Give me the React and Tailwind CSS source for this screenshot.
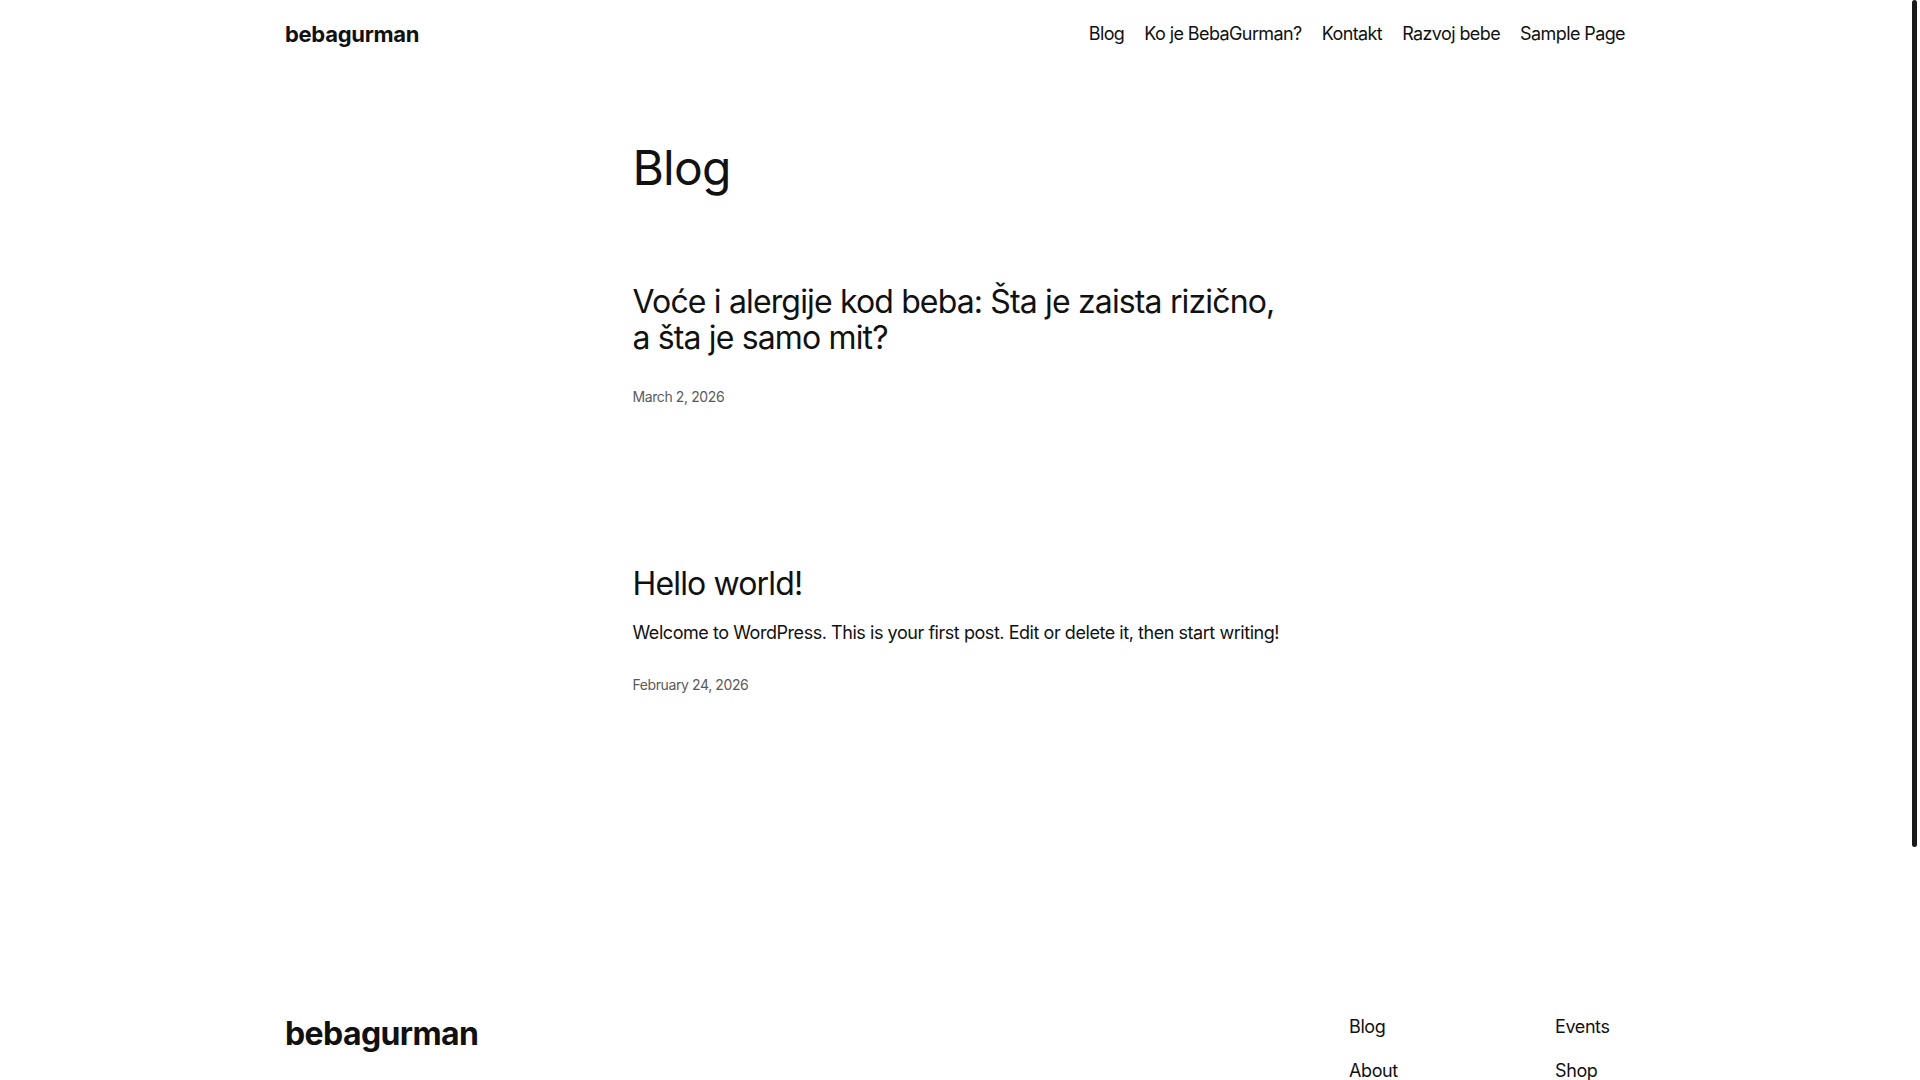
export default function App() {
  const font = { fontFamily: 'Inter, "Noto Sans", "Liberation Sans", sans-serif' };
  const nav = ["Blog", "Ko je BebaGurman?", "Kontakt", "Razvoj bebe", "Sample Page"];
  return (
    <div className="min-h-screen bg-white pr-[10px] text-[#111111]" style={font}>
      <header className="mx-auto flex h-[68px] w-[1340px] items-center justify-between">
        <a className="text-[22px] font-bold leading-none tracking-[-0.3px]">bebagurman</a>
        <nav className="flex items-center gap-[20px] text-[18px] leading-none tracking-[-0.6px]">
          {nav.map((n) => (
            <a key={n} className="whitespace-nowrap">{n}</a>
          ))}
        </nav>
      </header>

      <main className="mx-auto flex w-[645px] flex-col">
        <h1 className="mt-[73px] text-[48px] font-normal leading-[54px] tracking-[-0.8px]">Blog</h1>

        <article className="mt-[89px] flex flex-col">
          <h2 className="text-[32px] font-normal leading-[36px] tracking-[-0.85px]">
            <span className="whitespace-nowrap">Voće i alergije kod beba: Šta je zaista rizično,</span>
            <br />a šta je samo mit?
          </h2>
          <time className="mt-[31px] text-[14px] leading-[20px] tracking-[-0.4px] text-[#5a5a5a]">March 2, 2026</time>
        </article>

        <article className="mt-[159px] flex flex-col">
          <h2 className="text-[32px] font-normal leading-[36px] tracking-[-0.85px]">Hello world!</h2>
          <p className="mt-[18px] whitespace-nowrap text-[18px] leading-[25px] tracking-[-0.45px]">
            Welcome to WordPress. This is your first post. Edit or delete it, then start writing!
          </p>
          <time className="mt-[30px] text-[14px] leading-[20px] tracking-[-0.4px] text-[#5a5a5a]">February 24, 2026</time>
        </article>
      </main>

      <footer className="mx-auto mt-[319px] w-[1340px] pb-[60px]">
        <div className="flex justify-between">
          <a className="mt-[2px] text-[32px] font-bold leading-[36px] tracking-[-0.6px]">bebagurman</a>
          <div className="grid grid-cols-[206px_70px] text-[18px] leading-[25px] tracking-[-0.4px]">
            <div className="flex flex-col gap-[19px]">
              <a>Blog</a>
              <a>About</a>
              <a>FAQs</a>
              <a>Authors</a>
            </div>
            <div className="flex flex-col gap-[19px]">
              <a>Events</a>
              <a>Shop</a>
              <a>Patterns</a>
              <a>Themes</a>
            </div>
          </div>
        </div>
        <div className="mt-[60px] flex justify-between border-t border-[#e5e5e5] pt-[24px] text-[14px] text-[#111111]">
          <span>Twenty Twenty-Five</span>
          <span>Designed with WordPress</span>
        </div>
      </footer>

      <div className="pointer-events-none fixed right-[3px] top-0 h-[847px] w-[5px] rounded-full bg-[#1a1a1a]" />
    </div>
  );
}
